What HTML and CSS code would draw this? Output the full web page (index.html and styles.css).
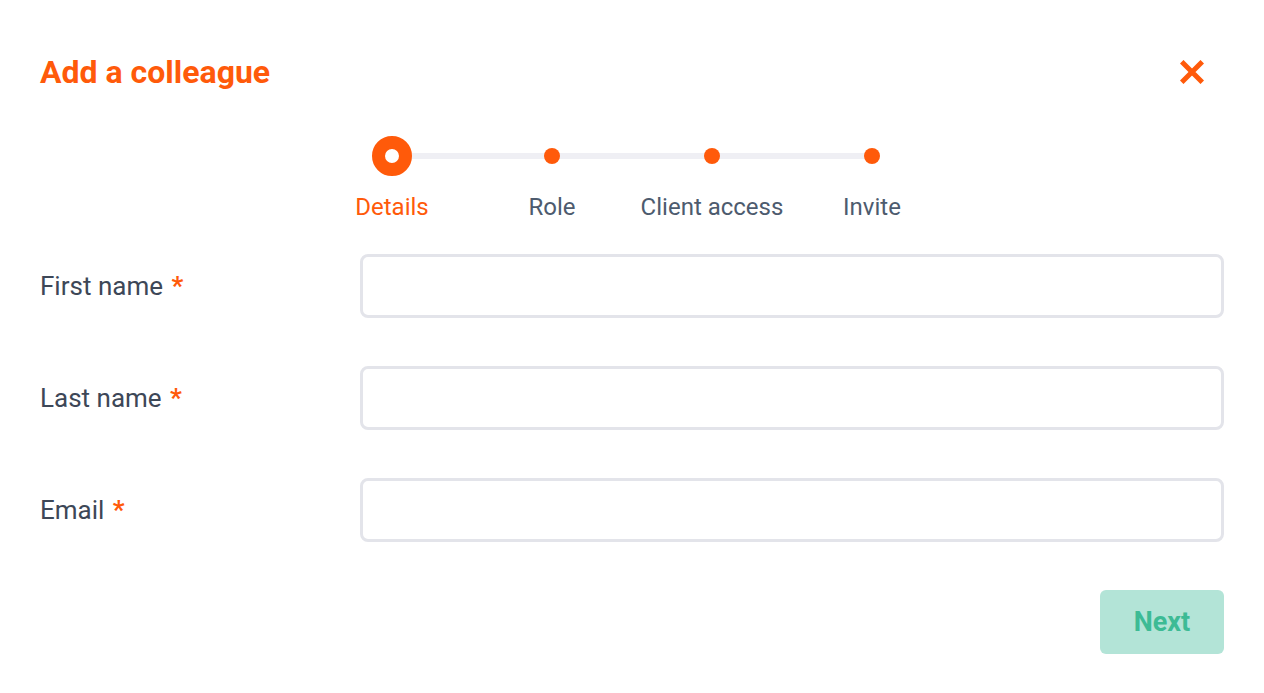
FILE: index.html
```html
<!DOCTYPE html>
<html>
<head>
<meta charset="utf-8">
<link rel="stylesheet" href="styles.css">
</head>
<body>
<div class="modal">
  <div class="header">
    <h1 class="title">Add a colleague</h1>
    <button class="close" aria-label="Close">
      <svg width="24" height="24" viewBox="0 0 24 24"><path d="M3.5 3.5 L20.5 20.5 M20.5 3.5 L3.5 20.5" stroke="#ff5a0a" stroke-width="5" stroke-linecap="square"/></svg>
    </button>
  </div>
  <div class="stepper">
    <div class="track"></div>
    <div class="step active"><span class="dot"></span><span class="label">Details</span></div>
    <div class="step"><span class="dot"></span><span class="label">Role</span></div>
    <div class="step"><span class="dot"></span><span class="label">Client access</span></div>
    <div class="step"><span class="dot"></span><span class="label">Invite</span></div>
  </div>
  <form class="form">
    <div class="row"><label class="field-label">First name <span class="req">*</span></label><input class="input" type="text"></div>
    <div class="row"><label class="field-label">Last name <span class="req">*</span></label><input class="input" type="text"></div>
    <div class="row"><label class="field-label">Email <span class="req">*</span></label><input class="input" type="text"></div>
    <div class="actions"><button type="button" class="next">Next</button></div>
  </form>
</div>
</body>
</html>
```
FILE: styles.css
```css
html, body { margin: 0; padding: 0; background: #fff; }
body { font-family: Roboto, "Noto Sans", sans-serif; }
.modal { padding: 40px; }
.header { display: flex; justify-content: space-between; align-items: center; height: 64px; }
.title { margin: 0; font-size: 32px; font-weight: 700; color: #ff5a0a; }
.close { background: none; border: 0; padding: 0; margin-right: 20px; width: 24px; height: 24px; display: flex; }
.stepper { position: relative; display: flex; justify-content: center; margin-top: 32px; }
.track { position: absolute; top: 17px; left: 352px; width: 480px; height: 6px; background: #efeff4; }
.step { position: relative; width: 160px; display: flex; flex-direction: column; align-items: center; }
.dot { width: 16px; height: 16px; border-radius: 50%; background: #ff5a0a; margin: 12px 0; }
.step.active .dot { width: 14px; height: 14px; border: 13px solid #ff5a0a; background: #fff; margin: 0; }
.label { margin-top: 17px; font-size: 24px; color: #4d5b6e; line-height: 28px; }
.step.active .label { color: #ff5a0a; }
.form { margin-top: 33px; }
.row { display: flex; align-items: center; margin-bottom: 48px; }
.field-label { width: 320px; flex: none; font-size: 26px; color: #3d4757; }
.req { color: #ff5a0a; font-weight: 700; margin-left: 2px; }
.input { flex: 1; height: 64px; box-sizing: border-box; border: 3px solid #e3e4ea; border-radius: 8px; padding: 0 16px; font-size: 20px; outline: none; }
.actions { display: flex; justify-content: flex-end; }
.next { width: 124px; height: 64px; border: 0; border-radius: 6px; background: #b3e4d7; color: #3dbb95; font-family: Roboto, sans-serif; font-weight: 700; font-size: 27px; }
```
